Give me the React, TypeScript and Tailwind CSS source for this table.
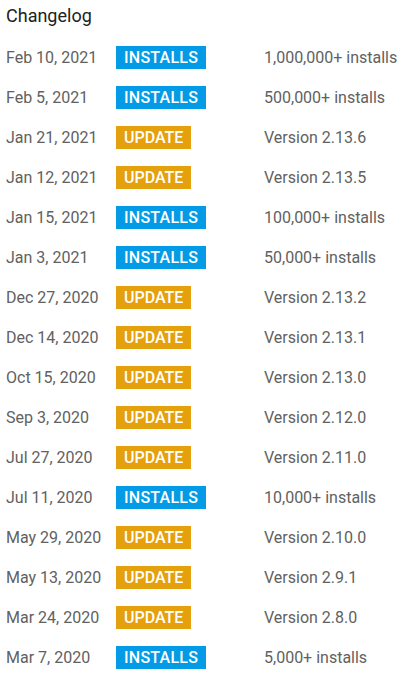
const rows: [string, "INSTALLS" | "UPDATE", string][] = [
  ["Feb 10, 2021", "INSTALLS", "1,000,000+ installs"],
  ["Feb 5, 2021", "INSTALLS", "500,000+ installs"],
  ["Jan 21, 2021", "UPDATE", "Version 2.13.6"],
  ["Jan 12, 2021", "UPDATE", "Version 2.13.5"],
  ["Jan 15, 2021", "INSTALLS", "100,000+ installs"],
  ["Jan 3, 2021", "INSTALLS", "50,000+ installs"],
  ["Dec 27, 2020", "UPDATE", "Version 2.13.2"],
  ["Dec 14, 2020", "UPDATE", "Version 2.13.1"],
  ["Oct 15, 2020", "UPDATE", "Version 2.13.0"],
  ["Sep 3, 2020", "UPDATE", "Version 2.12.0"],
  ["Jul 27, 2020", "UPDATE", "Version 2.11.0"],
  ["Jul 11, 2020", "INSTALLS", "10,000+ installs"],
  ["May 29, 2020", "UPDATE", "Version 2.10.0"],
  ["May 13, 2020", "UPDATE", "Version 2.9.1"],
  ["Mar 24, 2020", "UPDATE", "Version 2.8.0"],
  ["Mar 7, 2020", "INSTALLS", "5,000+ installs"],
];

const App = () => {
  return (
    <div className="bg-white w-[408px] h-[675px] px-[6px] font-['Roboto',sans-serif]">
      <h1 className="text-[18px] leading-[20px] pt-[6px] text-[#212121]">Changelog</h1>
      <div className="mt-[12px]">
        {rows.map(([date, kind, text], i) => (
          <div key={i} className="grid grid-cols-[110px_148px_1fr] items-center h-[40px]">
            <span className="text-[16px] text-[#616161]">{date}</span>
            <span>
              <span
                className={
                  "inline-block h-[23px] leading-[23px] px-[8px] text-[16px] font-medium text-white " +
                  (kind === "INSTALLS" ? "bg-[#039be5] tracking-[0.25px]" : "bg-[#e5a00d]")
                }
              >
                {kind}
              </span>
            </span>
            <span className="text-[16px] text-[#616161]">{text}</span>
          </div>
        ))}
      </div>
    </div>
  );
};

export default App;
